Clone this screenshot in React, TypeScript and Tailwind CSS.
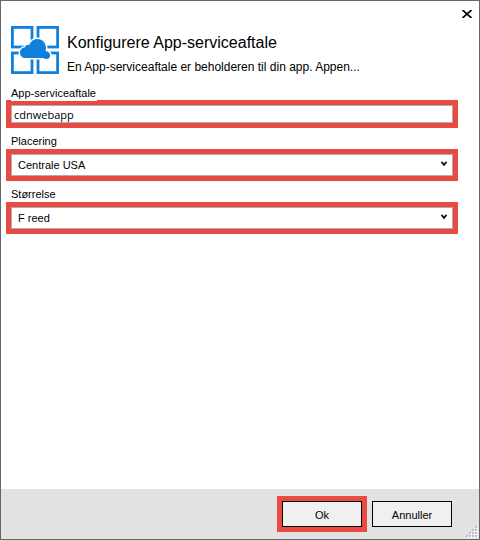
import { useState } from "react";
import type { ReactNode } from "react";

function PlanLogo() {
  return (
    <svg width="48" height="48" viewBox="0 0 48 48" className="shrink-0" aria-hidden="true">
      <g fill="none" stroke="#0f80dc" strokeWidth="2.800">
        <rect x="1.400" y="1.400" width="19.600" height="19.600" />
        <rect x="27" y="1.400" width="19.600" height="19.600" />
        <rect x="1.400" y="27" width="19.600" height="19.600" />
        <rect x="27" y="27" width="19.600" height="19.600" />
      </g>
      <path
        d="M14.500 32 C11.300 32 9 29.800 9 26.700 C9 23.700 11.200 21.500 14 21.200 C14.500 19.500 16.500 18.600 18.300 18.900 C19.800 15.300 22.800 13 26.500 13 C31.500 13 35 17 35 21.800 C35 23.200 34.800 24.200 34.400 25.300 C37.200 25.100 39.200 27 39.200 29.400 C39.200 31.700 37.600 33 35.300 33 C34 33 33 32.600 32.200 32 Z"
        fill="#0f80dc"
        stroke="#fff"
        strokeWidth="3"
        paintOrder="stroke"
      />
    </svg>
  );
}

function Chevron() {
  return (
    <svg
      width="6"
      height="6"
      viewBox="0 0 6 6"
      className="pointer-events-none absolute right-[6px] top-[7px]"
      aria-hidden="true"
    >
      <path d="M0.400 0.800 L3 3.800 L5.600 0.800" fill="none" stroke="#111" strokeWidth="1.800" />
    </svg>
  );
}

function Highlight({ children }: { children: ReactNode }) {
  return <div className="relative border-5 border-[#e94b43]">{children}</div>;
}

function Label({ id, children }: { id: string; children: ReactNode }) {
  return (
    <label htmlFor={id} className="relative z-10 ml-[5px] block h-4 w-fit bg-white pr-px text-[11px] leading-4">
      {children}
    </label>
  );
}

function SelectField({ id, label, options }: { id: string; label: string; options: string[] }) {
  return (
    <div className="mt-[5px]">
      <Label id={id}>{label}</Label>
      <Highlight>
        <select
          id={id}
          className="block h-[22px] w-full appearance-none border border-[#abadb3] bg-white pl-[6px] text-[11px] outline-none"
        >
          {options.map((o) => (
            <option key={o}>{o}</option>
          ))}
        </select>
        <Chevron />
      </Highlight>
    </div>
  );
}

function ResizeGrip() {
  const dots = [
    [9, 0], [6, 3], [9, 3], [3, 6], [6, 6], [9, 6], [0, 9], [3, 9], [6, 9], [9, 9],
  ];
  return (
    <svg width="12" height="12" viewBox="0 0 12 12" className="absolute bottom-px right-px" aria-hidden="true">
      {dots.map(([x, y]) => (
        <g key={`${x}-${y}`}>
          <rect x={x + 1} y={y + 1} width="2" height="2" fill="#fff" />
          <rect x={x} y={y} width="2" height="2" fill="#b8c0d0" />
        </g>
      ))}
    </svg>
  );
}

export default function App() {
  const [name, setName] = useState("cdnwebapp");
  return (
    <div className="flex min-h-screen flex-col border border-[#666] bg-white font-['Liberation_Sans',Arial,sans-serif] text-black">
      <div className="flex h-[25px] items-center justify-end pr-[7px]">
        <button type="button" aria-label="Luk" className="block">
          <svg width="10" height="8" viewBox="0 0 10 8" aria-hidden="true">
            <path d="M0.500 0 L9.500 8 M9.500 0 L0.500 8" stroke="#000" strokeWidth="1.700" />
          </svg>
        </button>
      </div>

      <header className="flex h-12 gap-2 pl-[10px]">
        <PlanLogo />
        <div className="min-w-0 pt-[5px]">
          <h1 className="text-base leading-6">Konfigurere App-serviceaftale</h1>
          <p className="text-xs leading-6">En App-serviceaftale er beholderen til din app. Appen...</p>
        </div>
      </header>

      <main className="flex-1 pl-[5px] pr-[21px] pt-[11px]">
        <div>
          <Label id="plan">App-serviceaftale</Label>
          <div className="-mt-px">
            <Highlight>
              <input
                id="plan"
                type="text"
                value={name}
                onChange={(e) => setName(e.target.value)}
                className="block h-[18px] w-full border border-[#abadb3] bg-white px-[2px] font-['Open_Sans',sans-serif] text-[11px] outline-none"
              />
            </Highlight>
          </div>
        </div>
        <SelectField id="location" label="Placering" options={["Centrale USA"]} />
        <SelectField id="size" label="Størrelse" options={["F reed"]} />
      </main>

      <footer className="relative flex h-[50px] items-center justify-end gap-[5px] bg-[#e2e2e2] pr-[27px]">
        <Highlight>
          <button type="button" className="block h-[26px] w-20 border border-black bg-[#f0f0f0] pt-[2px] text-[11px]">
            Ok
          </button>
        </Highlight>
        <button type="button" className="h-[26px] w-20 border border-black bg-[#f0f0f0] pt-[2px] text-[11px]">
          Annuller
        </button>
        <ResizeGrip />
      </footer>
    </div>
  );
}
